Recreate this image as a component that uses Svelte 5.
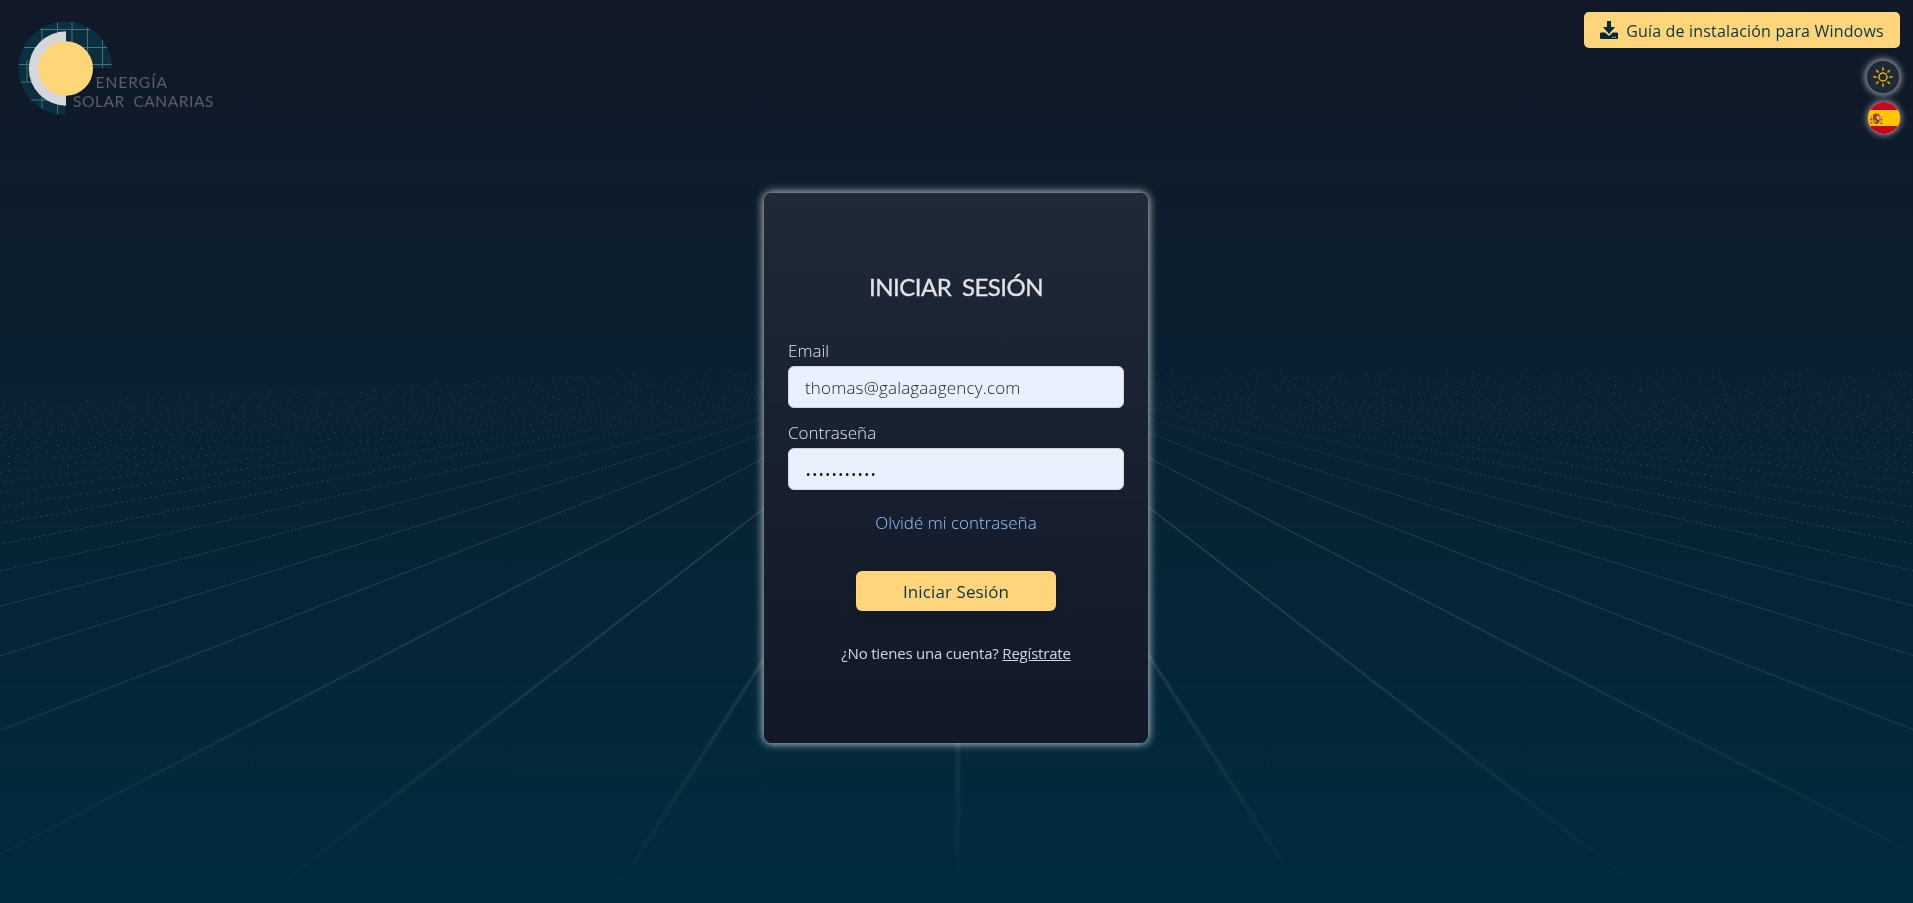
<script>
  let email = $state('thomas@galagaagency.com');
  let password = $state('contrasenia');
  const rays = [0, 45, 90, 135, 180, 225, 270, 315];
</script>

<div class="page">
  <div class="scene" aria-hidden="true">
    <div class="plane"><div class="grid"></div></div>
  </div>

  <header>
    <svg class="logo" width="200" height="98" viewBox="16 20 200 98">
      <defs>
        <clipPath id="disc"><path d="M65.5 68V115A46.7 46.7 0 1 1 112 68Z" /></clipPath>
      </defs>
      <g clip-path="url(#disc)">
        <rect x="16" y="20" width="98" height="98" fill="#0a3040" />
        <path d="M27 60V82M42 28V110M57.500 20V118M72 20V48M87.500 27V68M102.500 40V68M40 29.500H90M24 47.500H112M18 64.500H112M18 82H60M30 100H62" fill="none" stroke="#47707d" stroke-width="1" />
      </g>
      <path d="M66 31.300A37.200 37.200 0 0 0 66 105.700Z" fill="#d6d7da" />
      <circle cx="65.700" cy="68.500" r="27.300" fill="#fdd67a" />
      <text x="95.500" y="87.500" textLength="71.500" lengthAdjust="spacing">ENERGÍA</text>
      <text class="wide" x="73" y="107.300" textLength="140.500" lengthAdjust="spacing">SOLAR CANARIAS</text>
    </svg>

    <div class="tools">
      <button class="guide">
        <svg width="18" height="18" viewBox="0 0 18 18" fill="#002b3d">
          <path d="M7 0h4v6h4L9 13 3 6h4z" />
          <path d="M1 11.500h4L9 15l4-3.500h4a1 1 0 0 1 1 1V17a1 1 0 0 1-1 1H1a1 1 0 0 1-1-1v-4.500a1 1 0 0 1 1-1z" />
          <path d="M12 15.800h1.400v1H12zM14.600 15.800H16v1h-1.400z" fill="#fdd47a" />
        </svg>
        <span>Guía de instalación para Windows</span>
      </button>
      <button class="round theme" aria-label="Tema">
        <svg width="20" height="20" viewBox="-10 -10 20 20" fill="none" stroke="#e5b10c" stroke-width="1.500">
          <circle r="4" />
          {#each rays as a}
            <path d="M0-6.300V-9.700" transform="rotate({a})" />
          {/each}
        </svg>
      </button>
      <button class="round flag" aria-label="Idioma">
        <svg width="32" height="32" viewBox="0 0 32 32">
          <path fill="#c8071b" d="M0 0h32v32H0z" />
          <path fill="#ffc500" d="M0 8h32v16H0z" />
          <path d="M3 14v7.500M13.300 14v7.500" stroke="#b58a4a" stroke-width="1.300" />
          <path d="M2 17.500h2.500M12.300 17.500h2M2 21.500h2.300M12.200 21.500h2.300" stroke="#b2401d" stroke-width="1.200" />
          <path d="M5 12.500q3.300-2 6.500 0v1.500H5z" fill="#a8451b" />
          <path d="M5 14h6.500v5q0 2.500-3.250 3Q5 21.500 5 19z" fill="#a5381c" />
          <path d="M8.500 14.200H11v3.300H8.500z" fill="#d8c6c0" />
          <path d="M5.500 17.500h2.700v3H5.500z" fill="#d8952c" />
          <circle cx="8.300" cy="17.600" r="1" fill="#52486f" />
        </svg>
      </button>
    </div>
  </header>

  <main class="card">
    <h1>INICIAR SESIÓN</h1>
    <form>
      <label class="l1" for="email">Email</label>
      <input id="email" class="mail" type="text" bind:value={email} />
      <label class="l2" for="pass">Contraseña</label>
      <input id="pass" class="pass" type="password" bind:value={password} />
      <a class="forgot" href="#olvide">Olvidé mi contraseña</a>
      <button class="submit" type="button">Iniciar Sesión</button>
    </form>
    <p>¿No tienes una cuenta? <a href="#registro">Regístrate</a></p>
  </main>
</div>

<style>
  :global(body) { margin: 0; background: #002c3e; }
  .page {
    position: relative;
    box-sizing: border-box;
    width: 100%;
    height: 903px;
    overflow: hidden;
    background: linear-gradient(to bottom, #111827, #002c3e);
    font-family: "Open Sans", "Noto Sans", sans-serif;
    font-weight: 300;
    font-size: 16px;
    display: flex;
    flex-direction: column;
    align-items: center;
  }
  .scene {
    position: absolute;
    inset: 0;
    overflow: hidden;
    perspective: 200px;
    opacity: 0.5;
    -webkit-mask-image: linear-gradient(to top, transparent, rgba(0, 0, 0, 0.65) 50%, rgba(0, 0, 0, 0.4) 59%);
    mask-image: linear-gradient(to top, transparent, rgba(0, 0, 0, 0.65) 50%, rgba(0, 0, 0, 0.4) 59%);
  }
  .plane { position: absolute; inset: 0; transform: rotateX(65deg); }
  .grid {
    width: 11478px;
    height: 2709px;
    margin-left: -964px;
    transform: translate(0.3px, -710.8px);
    will-change: transform;
    background-size: 60px 60px;
    background-image:
      linear-gradient(to right, rgba(255, 255, 255, 0.62) 1px, transparent 0),
      linear-gradient(to bottom, rgba(255, 255, 255, 0.07) 1px, transparent 0);
  }

  header {
    position: relative;
    width: 100%;
    height: 193px;
    flex: none;
    box-sizing: border-box;
    padding: 12px 13px 0 16px;
    display: flex;
    justify-content: space-between;
    align-items: flex-start;
  }
  .logo { margin-top: 8px; }
  .logo text { font-family: Lato, sans-serif; font-weight: 400; font-size: 15.5px; fill: #5f5d5e; }
  .logo .wide { word-spacing: 4px; }
  .tools { display: flex; flex-direction: column; align-items: flex-end; }
  button { font: inherit; border: 0; padding: 0; display: flex; align-items: center; justify-content: center; }
  .guide {
    width: 316px;
    height: 36px;
    border-radius: 5px;
    background: #ffd57b;
    color: #0a3442;
    font-weight: 400;
    gap: 8px;
    white-space: nowrap;
  }
  .guide span { letter-spacing: 0.17px; padding-top: 2px; }
  .round { border-radius: 50%; overflow: hidden; box-shadow: 0 0 6px 1px rgba(255, 255, 255, 0.6); }
  .theme { width: 34px; height: 34px; margin-top: 12px; background: #1f2937; border: 1px solid #5d646f; box-sizing: border-box; }
  .flag { width: 32px; height: 32px; margin-top: 8px; }

  .card {
    position: relative;
    box-sizing: border-box;
    width: 384px;
    height: 550px;
    flex: none;
    margin-right: 1px;
    padding: 0 24px;
    border-radius: 8px;
    background: linear-gradient(to bottom, #1f2937, #111827);
    box-shadow: 0 0 8px 1px rgba(255, 255, 255, 0.75);
    text-align: center;
    color: #e0e1e4;
  }
  h1 {
    margin: 78px 0 0;
    font: 400 24px/32px Lato, sans-serif;
    letter-spacing: -0.5px;
    word-spacing: 5px;
    -webkit-text-stroke: 0.3px #e2e3e5;
    color: #e2e3e5;
  }
  form { display: flex; flex-direction: column; margin-top: 36px; font-size: 17px; }
  label { height: 24px; line-height: 24px; margin-bottom: 3px; text-align: left; font-weight: 300; color: #e2e5ea; }
  .l2 { margin-top: 13px; }
  input {
    box-sizing: border-box;
    width: 100%;
    height: 42px;
    padding: 1px 16px 0;
    border: 1px solid #d1d5db;
    border-radius: 6px;
    background: #e8f0fe;
    color: #20242b;
    font: inherit;
    letter-spacing: 0.18px;
    outline: 0;
  }
  .pass { color: #000; padding-top: 11px; letter-spacing: 0.1px; }
  .forgot { align-self: center; margin-top: 21px; line-height: 24px; font-weight: 300; color: #93c5fd; text-decoration: none; }
  .submit {
    align-self: center;
    width: 200px;
    height: 40px;
    margin-top: 36px;
    padding-top: 1px;
    border-radius: 6px;
    background: #ffd57b;
    color: #0a3442;
    box-shadow: 0 8px 14px rgba(0, 0, 0, 0.12);
    font-weight: 400;
    letter-spacing: 0.1px;
  }
  p { margin: 30px 0 0; font-size: 15px; line-height: 24px; font-weight: 400; letter-spacing: -0.2px; white-space: nowrap; color: #d3d5da; }
  p a { color: inherit; }
</style>
